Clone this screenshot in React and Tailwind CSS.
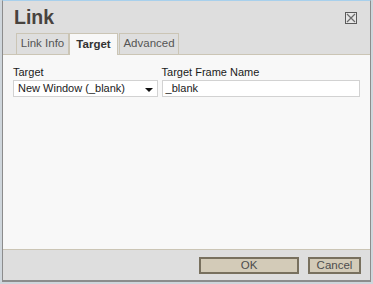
export default function App() {
  return (
    <div className="w-[373px] h-[284px] bg-[#cfd6dc] flex font-['Liberation_Sans',Arial,sans-serif]">
      <div className="ml-[2px] w-[369px] h-[282px] flex flex-col bg-[#dedede] border-l border-r border-b-2 border-[#8c8c8c] border-t border-t-[#a8d0ec]">
        {/* header */}
        <div className="h-[32px] flex items-start justify-between pl-[11px] pr-[13px]">
          <div className="text-[19.5px] font-bold leading-none text-[#48433e] mt-[7px]">Link</div>
          <button className="mt-[11px] w-[12px] h-[12px] border border-[#5a5a5a] bg-[#e6e6e6] flex items-center justify-center">
            <svg width="10" height="10" viewBox="0 0 10 10">
              <path d="M1 1 L9 9 M9 1 L1 9" stroke="#6b6b6b" strokeWidth="1.2" />
            </svg>
          </button>
        </div>
        {/* tabs */}
        <div className="flex pl-[13px] border-b border-[#cbc5b5] h-[22px] items-end">
          <div className="h-[21px] w-[53px] border border-b-0 border-[#cbc5b5] bg-[#dedede] text-[11.5px] text-[#555] flex items-center justify-center">Link Info</div>
          <div className="h-[22px] -mb-px w-[49px] border border-b-0 border-[#cbc5b5] bg-[#f8f8f8] text-[11.5px] font-bold text-[#333] flex items-center justify-center">Target</div>
          <div className="h-[21px] w-[60px] ml-[1px] border border-b-0 border-[#cbc5b5] bg-[#dedede] text-[11.5px] text-[#555] flex items-center justify-center">Advanced</div>
        </div>
        {/* content */}
        <div className="flex-1 bg-[#f8f8f8] px-[10px] pt-[11px]">
          <div className="flex gap-[4px]">
            <div className="w-[145px] flex flex-col">
              <span className="text-[11px] leading-[13px] text-[#1a1a1a]">Target</span>
              <div className="mt-[1px] h-[17px] border border-[#d2d2d2] bg-white flex items-center justify-between pl-[4px] pr-[4px]">
                <span className="text-[11px] text-[#1a1a1a]">New Window (_blank)</span>
                <svg width="8" height="5" viewBox="0 0 8 5" className="mt-[3px]">
                  <path d="M0 0 H8 L4 4 Z" fill="#111" />
                </svg>
              </div>
            </div>
            <div className="w-[199px] flex flex-col">
              <span className="text-[11px] leading-[13px] text-[#1a1a1a]">Target Frame Name</span>
              <div className="mt-[1px] h-[17px] border border-[#d2d2d2] bg-white flex items-center pl-[3px]">
                <span className="text-[11px] text-[#1a1a1a]">_blank</span>
              </div>
            </div>
          </div>
        </div>
        {/* footer */}
        <div className="h-[31px] border-t border-[#cbc5b5] flex items-start justify-end gap-[9px] pt-[7px] pr-[9px]">
          <button className="w-[100px] h-[17px] border-2 border-[#78705e] bg-[#d3cbb8] text-[11.5px] text-[#4d4d4d] leading-none">OK</button>
          <button className="w-[53px] h-[17px] border-2 border-[#78705e] bg-[#d3cbb8] text-[11.5px] text-[#4d4d4d] leading-none">Cancel</button>
        </div>
      </div>
    </div>
  );
}
